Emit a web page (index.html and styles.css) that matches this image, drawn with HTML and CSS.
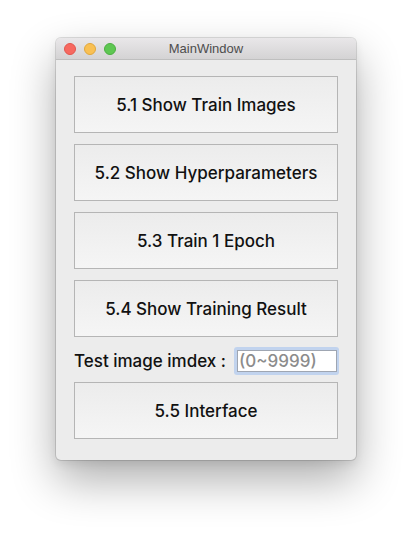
FILE: index.html
```html
<!DOCTYPE html>
<html>
<head>
<meta charset="utf-8">
<link rel="stylesheet" href="styles.css">
</head>
<body>
<div class="window">
  <div class="titlebar">
    <div class="lights">
      <span class="light red"></span>
      <span class="light yellow"></span>
      <span class="light green"></span>
    </div>
    <div class="title">MainWindow</div>
  </div>
  <div class="content">
    <button class="btn">5.1 Show Train Images</button>
    <button class="btn">5.2 Show Hyperparameters</button>
    <button class="btn">5.3 Train 1 Epoch</button>
    <button class="btn">5.4 Show Training Result</button>
    <div class="row">
      <label class="label">Test image imdex :</label>
      <div class="input-ring"><input class="input" placeholder="(0~9999)"></div>
    </div>
    <button class="btn last">5.5 Interface</button>
  </div>
</div>
</body>
</html>
```
FILE: styles.css
```css
html, body {
  margin: 0;
  padding: 0;
  background: #ffffff;
}
body {
  width: 412px;
  height: 534px;
  overflow: hidden;
  font-family: Inter, "Liberation Sans", Arial, sans-serif;
}
.window {
  margin: 38px 0 0 56px;
  width: 300px;
  height: 422px;
  box-sizing: border-box;
  border-radius: 5px;
  background: #ececec;
  box-shadow: 0 0 0 1px rgba(0,0,0,0.12), 0 20px 45px rgba(0,0,0,0.32), 0 4px 10px rgba(0,0,0,0.08);
  overflow: hidden;
  display: flex;
  flex-direction: column;
}
.titlebar {
  position: relative;
  height: 21px;
  flex: none;
  background: linear-gradient(#e9e7e9, #d4d3d4);
  border-bottom: 1px solid #bfbfbf;
  display: flex;
  align-items: center;
  justify-content: center;
}
.lights {
  position: absolute;
  left: 8px;
  top: 5px;
  display: flex;
  gap: 8px;
}
.light {
  width: 12px;
  height: 12px;
  border-radius: 50%;
  box-sizing: border-box;
}
.red { background: #f76960; border: 1px solid #e2564e; }
.yellow { background: #f9c053; border: 1px solid #e0a73c; }
.green { background: #5ec752; border: 1px solid #4cae41; }
.title {
  font-family: "Liberation Sans", Arial, sans-serif;
  font-size: 13px;
  color: #4d4d4d;
  line-height: 21px;
}
.content {
  padding: 16px 18px 0 18px;
  display: flex;
  flex-direction: column;
}
.btn {
  height: 57px;
  margin: 0 0 11px 0;
  padding: 0;
  box-sizing: border-box;
  border: 1px solid #b5b5b5;
  border-radius: 0;
  background: linear-gradient(#ececec, #f5f5f5);
  font-family: Inter, "Liberation Sans", Arial, sans-serif;
  font-weight: 500;
  font-size: 17px;
  color: #111111;
}
.btn.last { margin: 0; }
.row {
  height: 28px;
  margin: -1px 0 7px 0;
  display: flex;
  align-items: center;
  justify-content: space-between;
}
.label {
  font-weight: 500;
  font-size: 17px;
  color: #111111;
}
.input-ring {
  width: 105px;
  height: 28px;
  box-sizing: border-box;
  border-radius: 3px;
  background: #c1d3ee;
  padding: 3px 2px 3px 3px;
  margin-right: -1px;
}
.input {
  width: 100%;
  height: 100%;
  box-sizing: border-box;
  border: 1px solid #9fa6b2;
  background: #ffffff;
  padding: 0 0 0 1px;
  margin: 0;
  outline: none;
  font-family: Inter, "Liberation Sans", Arial, sans-serif;
  font-weight: 500;
  font-size: 17px;
}
.input::placeholder {
  color: #8c8c8c;
}
```
